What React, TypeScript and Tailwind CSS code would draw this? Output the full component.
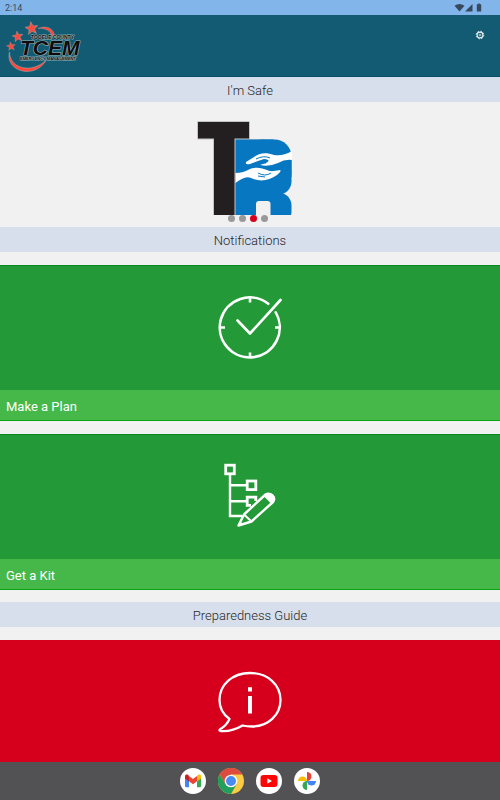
import type { ReactNode } from "react";

function StatusBar() {
  return (
    <div className="flex h-[15px] shrink-0 items-center justify-between bg-[#82b5ea] pl-[5px] pr-4 text-[#36495e]">
      <span className="text-[9px] leading-4">2:14</span>
      <svg width="30" height="9" viewBox="0 0 30 9" fill="currentColor" aria-hidden="true">
        <path d="M.500 2.800Q5.500-1 10.500 2.800L5.500 8.500Z" />
        <path d="M18.500 1V8.500H11Z" />
        <path d="M24.200.5h1.600v.8h1.400V8.500h-4.400V1.300h1.400Z" />
      </svg>
    </div>
  );
}

const STAR = "M0-1 .26-.34 .95-.31 .41.13 .59.81 0 .42-.59.81-.41.13-.95-.31-.26-.34Z";

function TcemLogo() {
  return (
    <svg width="80" height="52" viewBox="5 20 80 52" role="img" aria-label="TCEM">
      <path
        d="M9.500 52C6.500 62 15 71.500 27 71.500 35 71.500 43 67 46.500 59.500 41 65.500 33 68.500 26 68 16 67 10 61.500 9.500 52Z"
        fill="#f94a3c"
        stroke="#aec2c8"
        strokeWidth=".4"
      />
      <path d="M38 28.500C45 25 54 27.500 54.500 36.500L52 36.500C51 30.500 45 28 38 28.500Z" fill="#f94a3c" stroke="#aec2c8" strokeWidth=".3" />
      <g fill="#f94a3c" stroke="#c5b0ae" strokeWidth=".06">
        <path d={STAR} transform="translate(31.700 28.500) rotate(-8) scale(6.800)" />
        <path d={STAR} transform="translate(17.700 36.700) rotate(-8) scale(5.600)" />
        <path d={STAR} transform="translate(11 46.500) rotate(-8) scale(4.600)" />
      </g>
      <g
        fontFamily="'Liberation Sans', Arial, sans-serif"
        fontWeight="bold"
        fill="#0b0d0e"
        stroke="#9eb3b9"
        paintOrder="stroke"
        strokeLinejoin="round"
      >
        <text x="20" y="55" fontSize="21" fontStyle="italic" strokeWidth="1.200">TCEM</text>
        <text x="31" y="39" fontSize="5" strokeWidth="1">TOOELE COUNTY</text>
        <text x="20" y="60" fontSize="4" strokeWidth="1">EMERGENCY MANAGEMENT</text>
      </g>
    </svg>
  );
}

function Header() {
  return (
    <header className="flex h-[62px] shrink-0 items-start justify-between border-b border-[#0a4e69] bg-[#135b73] pl-[5px] pr-[15px]">
      <div className="pt-[5px]">
        <TcemLogo />
      </div>
      <button type="button" aria-label="Settings" className="mt-[15px] flex h-[10px] w-[10px] items-center justify-center">
        <svg width="10" height="10" viewBox="0 0 10 10" fill="none" stroke="#e9f0f3">
          <circle cx="5" cy="5" r="2.900" strokeWidth="1.100" />
          <circle cx="5" cy="5" r="3.800" strokeWidth="1" strokeDasharray="1.500 1.485" />
          <circle cx="5" cy="5" r=".9" strokeWidth=".7" />
        </svg>
      </button>
    </header>
  );
}

function SectionTitle({ children }: { children: ReactNode }) {
  return (
    <h2 className="h-[25px] bg-[#d8dfec] text-center text-[13px] font-light leading-7 text-[#262626]">{children}</h2>
  );
}

function PartnerLogo() {
  return (
    <svg width="110" height="100" viewBox="0 0 110 100" role="img" aria-label="TR">
      <g fill="#c4c4c4">
        <rect x="7" y="6" width="53" height="18.500" rx="1" />
        <rect x="23" y="6" width="23" height="94" />
        <rect x="45" y="24" width="30" height="4" />
      </g>
      <g fill="#231f20">
        <rect x="8" y="7" width="51" height="16.500" />
        <rect x="24" y="7" width="20.500" height="93" />
      </g>
      <g fill="#0877c2">
        <rect x="45.500" y="24.500" width="38" height="75.500" />
        <rect x="56" y="24.500" width="45.500" height="48" rx="17" />
        <rect x="60" y="45" width="41.500" height="34.500" rx="13" />
        <rect x="84" y="40" width="17.500" height="22" />
        <rect x="60" y="77.500" width="41.500" height="32" rx="13" />
      </g>
      <rect x="66" y="86" width="14.500" height="20" rx="3" fill="#f1f1f1" />
      <g fill="#fff">
        <path d="M102 36C95 40 90 41 84 40 76 37 69 38 64 42L56 47Q55 50 60 49L68 46 74 44Q82 45 76 48L70 50Q79 52 88 48 95 44 102 45Z" />
        <path d="M45.500 58C51 58 54 57 58 55 65 51 72 53 77 55 81 57 84 56 90 55Q92 56 87 60C79 66 69 67 61 63 56 61 51 64 45.500 68Z" />
      </g>
      <path d="M66 44Q74 40 80 43M69 47L76 48M68 58Q75 62 81 58M68 61L75 62" fill="none" stroke="#0877c2" strokeWidth="1" />
    </svg>
  );
}

function Carousel() {
  const dots = ["bg-[#999]", "bg-[#999]", "bg-[#d6001c]", "bg-[#999]"];
  return (
    <div className="relative flex h-[125px] justify-center pt-[13px]">
      <div className="-ml-[10px]">
        <PartnerLogo />
      </div>
      <div className="absolute inset-x-0 bottom-[5px] flex justify-center gap-1 pr-1">
        {dots.map((color, i) => (
          <button key={i} type="button" aria-label={"Slide " + (i + 1)} className={"h-[7px] w-[7px] rounded-full " + color} />
        ))}
      </div>
    </div>
  );
}

function ClockCheckIcon() {
  return (
    <svg width="90" height="85" viewBox="0 0 90 85" fill="none" stroke="#fff" strokeWidth="2.600" strokeLinecap="round" strokeLinejoin="round" aria-hidden="true">
      <path d="M63.300 18.800A30 30 0 1 0 70.700 27.300" />
      <path d="M32.500 35.500L45 48.500 75.500 15" />
      <path d="M45 12.500V17.500M45 67.500V72.500M15 42.500H20M70 42.500H75" strokeLinecap="butt" />
    </svg>
  );
}

function ChecklistPencilIcon() {
  return (
    <svg width="90" height="85" viewBox="0 0 90 85" fill="none" stroke="#fff" strokeWidth="2.400" aria-hidden="true">
      <rect x="20.700" y="11.200" width="8.600" height="8.600" strokeWidth="2.800" />
      <path d="M25 20V62H37M25 31.300H42M25 47.300H42" />
      <rect x="42.200" y="27" width="8.600" height="8.600" strokeWidth="2.800" />
      <path d="M46 51.300H42.200V43.200H50.800V47" strokeWidth="2.800" />
      <path
        d="M39 60.500L60.500 40.500Q64 38.500 67.500 41.500 70.500 44.500 68 48L46.500 67.500 33.500 71.500Z"
        fill="#239938"
        strokeWidth="2.400"
        strokeLinejoin="round"
      />
      <path d="M58.500 42Q64 37 68.500 41 72 45 67 50.500Z" fill="#fff" stroke="none" />
      <path d="M39 60.500L46.500 67.500" strokeWidth="2" />
      <path d="M33 72L34.800 67 38.500 70.500Z" fill="#fff" stroke="none" />
    </svg>
  );
}

function InfoBubbleIcon() {
  return (
    <svg width="90" height="85" viewBox="0 0 90 85" fill="none" stroke="#fff" strokeWidth="2.300" strokeLinejoin="round" aria-hidden="true">
      <path d="M24.500 59C17.500 54 14.500 47 14.500 40 14.500 25 27 13 45 13S75.500 25 75.500 40 63 66.500 47 66.500Q42 66.500 37.500 65.500C30 70 21 71.500 15.500 71 13.500 70.500 15 69 17 68 21 65.500 23 62 24.500 59Z" />
      <path d="M45 36V53.500M45 27.300V31.500" strokeWidth="4" />
    </svg>
  );
}

function PlanTile({ label, icon }: { label: string; icon: ReactNode }) {
  return (
    <button type="button" className="block w-full bg-[#239938] text-left">
      <span className="flex h-[125px] items-start justify-center border-t border-[#088a20] pt-[19px]">{icon}</span>
      <span className="block h-[31px] border-b border-[#09a414] bg-[#45b849] px-[6px] text-[13px] leading-[33px] text-white">
        {label}
      </span>
    </button>
  );
}

function GmailIcon() {
  return (
    <svg width="26" height="26" viewBox="0 0 26 26" aria-hidden="true">
      <circle cx="13" cy="13" r="13" fill="#fff" />
      <path d="M5 9v9q0 1.200 1.200 1.200H9V10.500Z" fill="#4285f4" />
      <path d="M21 9v9q0 1.200-1.200 1.200H17V10.500Z" fill="#34a853" />
      <path d="M17 8.300V13.500L21 10.500V8.500C21 6.500 19 6 17.700 7Z" fill="#fbbc04" />
      <path d="M5 8.500V10.500L9 13.500V8.300L8.300 7C7 6 5 6.500 5 8.500Z" fill="#c5221f" />
      <path d="M9 8L13 11 17 8V13.300L13 16.300 9 13.300Z" fill="#ea4335" />
    </svg>
  );
}

function ChromeIcon() {
  return (
    <svg width="26" height="26" viewBox="0 0 26 26" aria-hidden="true">
      <circle cx="13" cy="13" r="13" fill="#fbcb43" />
      <path d="M1.700 6.500A13 13 0 0 1 24.300 6.500H13L7.400 16.200Z" fill="#dc4b3e" />
      <path d="M1.700 6.500A13 13 0 0 0 13 26L18.600 16.200 13 18 7.400 16.200Z" fill="#22a05b" />
      <circle cx="13" cy="13" r="6.300" fill="#fff" />
      <circle cx="13" cy="13" r="5" fill="#4a8af4" />
    </svg>
  );
}

function YoutubeIcon() {
  return (
    <svg width="26" height="26" viewBox="0 0 26 26" aria-hidden="true">
      <circle cx="13" cy="13" r="13" fill="#fff" />
      <rect x="4.500" y="7" width="17" height="12" rx="3" fill="#fa0808" />
      <path d="M11.300 10.300V15.700L16 13Z" fill="#fff" />
    </svg>
  );
}

function PhotosIcon() {
  return (
    <svg width="26" height="26" viewBox="0 0 26 26" aria-hidden="true">
      <circle cx="13" cy="13" r="13" fill="#fff" />
      <path d="M13 4A4.500 4.500 0 0 1 13 13Z" fill="#ea4335" />
      <path d="M22 13A4.500 4.500 0 0 1 13 13Z" fill="#4285f4" />
      <path d="M13 22A4.500 4.500 0 0 1 13 13Z" fill="#34a853" />
      <path d="M4 13A4.500 4.500 0 0 1 13 13Z" fill="#fbbc04" />
    </svg>
  );
}

function Dock() {
  const apps = [
    { name: "Gmail", icon: <GmailIcon /> },
    { name: "Chrome", icon: <ChromeIcon /> },
    { name: "YouTube", icon: <YoutubeIcon /> },
    { name: "Photos", icon: <PhotosIcon /> },
  ];
  return (
    <nav className="flex h-[38px] shrink-0 items-center justify-center gap-3 bg-[#525254]">
      {apps.map((app) => (
        <button key={app.name} type="button" aria-label={app.name}>
          {app.icon}
        </button>
      ))}
    </nav>
  );
}

export default function App() {
  return (
    <div className="flex h-screen flex-col bg-[#f1f1f1] font-['Roboto',sans-serif]">
      <StatusBar />
      <Header />
      <main className="flex min-h-0 flex-1 flex-col overflow-hidden">
        <section>
          <SectionTitle>I'm Safe</SectionTitle>
          <Carousel />
        </section>
        <section>
          <SectionTitle>Notifications</SectionTitle>
          <div className="flex flex-col gap-[13px] pb-3 pt-[13px]">
            <PlanTile label="Make a Plan" icon={<ClockCheckIcon />} />
            <PlanTile label="Get a Kit" icon={<ChecklistPencilIcon />} />
          </div>
        </section>
        <section className="flex flex-1 flex-col">
          <SectionTitle>Preparedness Guide</SectionTitle>
          <button type="button" aria-label="Preparedness Guide" className="mt-[13px] flex flex-1 items-start justify-center bg-[#d6001c] pt-5">
            <InfoBubbleIcon />
          </button>
        </section>
      </main>
      <Dock />
    </div>
  );
}
